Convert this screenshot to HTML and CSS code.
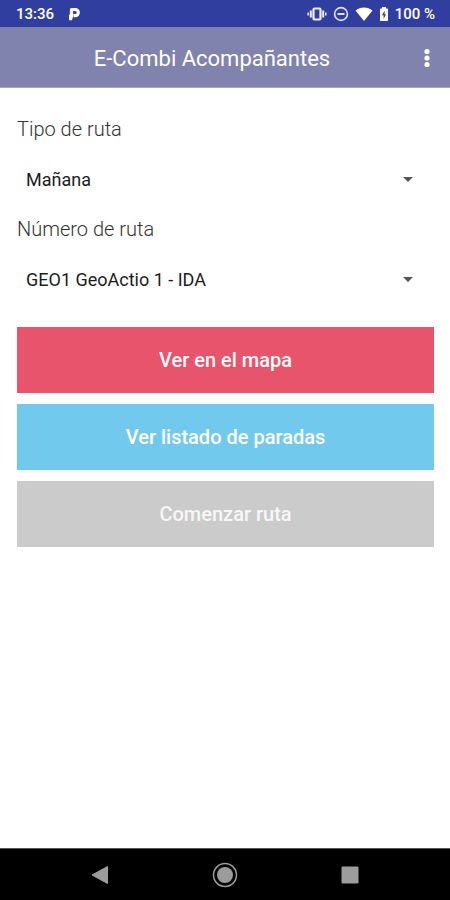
FILE: index.html
```html
<!DOCTYPE html>
<html lang="es">
<head>
    <meta charset="UTF-8">
    <meta name="viewport" content="width=device-width, initial-scale=1.0">
    <title>E-Combi Acompañantes</title>
    <link rel="stylesheet" href="styles.css">
</head>
<body>

    <!-- Status bar -->
    <div class="status-bar">
        <div class="status-left">
            <span>13:36</span>
            <svg width="14" height="16" viewBox="0 0 14 16">
                <path d="M3.500 9V3.500H7.200a3.100 3.100 0 0 1 0 6.200H5.500" fill="none" stroke="#fff" stroke-width="3.200" stroke-linejoin="round"/>
                <path d="M1 8.500h4.500l-1.500 5.800H1z" fill="#fff"/>
            </svg>
        </div>
        <div class="status-right">
            <svg width="20" height="16" viewBox="0 0 20 16" fill="none" stroke="#eceefa">
                <rect x="6.500" y="2.500" width="7" height="11" rx="1" stroke-width="2.200"/>
                <path d="M3.800 4.500v7M16.200 4.500v7" stroke-width="2"/>
                <path d="M1.200 6.500v3M18.800 6.500v3" stroke-width="1.500"/>
            </svg>
            <svg width="16" height="16" viewBox="0 0 16 16" fill="none" stroke="#dfe3f8">
                <circle cx="8" cy="8" r="6.400" stroke-width="1.600"/>
                <path d="M4.500 8h7" stroke-width="2"/>
            </svg>
            <svg width="18" height="16" viewBox="0 0 18 16" fill="#fff">
                <path d="M9 15L.5 4.600C3 2.600 5.800 1.600 9 1.600s6 1 8.500 3z"/>
            </svg>
            <svg width="10" height="16" viewBox="0 0 10 16">
                <path d="M3 1h4v1.500h1.200c.5 0 .8.3.8.8v10.900c0 .5-.3.800-.8.800H1.800c-.5 0-.8-.3-.8-.8V3.300c0-.5.3-.8.8-.8H3z" fill="#fff"/>
                <path d="M5.600 4.500L3 9.300h1.600v3.700L7 8.200H5.600z" fill="#303f9f"/>
            </svg>
            <span>100 %</span>
        </div>
    </div>

    <!-- App bar -->
    <header class="app-bar">
        <h1 class="app-title">E-Combi Acompañantes</h1>
        <button class="menu-button" type="button" aria-label="Más opciones">
            <svg width="6" height="20" viewBox="0 0 6 20" fill="#fff">
                <circle cx="3" cy="3.500" r="2.600"/>
                <circle cx="3" cy="10" r="2.600"/>
                <circle cx="3" cy="16.500" r="2.600"/>
            </svg>
        </button>
    </header>

    <main class="content">
        <div class="field">
            <label for="tipo">Tipo de ruta</label>
            <select id="tipo">
                <option>Mañana</option>
            </select>
        </div>
        <div class="field">
            <label for="numero">Número de ruta</label>
            <select id="numero">
                <option>GEO1 GeoActio 1 - IDA</option>
            </select>
        </div>

        <div class="actions">
            <button class="action action-map" type="button">Ver en el mapa</button>
            <button class="action action-list" type="button">Ver listado de paradas</button>
            <button class="action action-start" type="button" disabled>Comenzar ruta</button>
        </div>
    </main>

    <!-- System navigation -->
    <nav class="nav-bar">
        <button type="button" aria-label="Atrás">
            <svg width="18" height="20" viewBox="0 0 18 20" fill="#9c9c9c">
                <path d="M16.500 1.500v17L1 10z" stroke="#9c9c9c" stroke-linejoin="round"/>
            </svg>
        </button>
        <button type="button" aria-label="Inicio">
            <svg width="26" height="26" viewBox="0 0 26 26">
                <circle cx="13" cy="13" r="11.500" fill="none" stroke="#9c9c9c" stroke-width="1.500"/>
                <circle cx="13" cy="13" r="8" fill="#9c9c9c"/>
            </svg>
        </button>
        <button type="button" aria-label="Recientes">
            <svg width="18" height="18" viewBox="0 0 18 18">
                <rect x="0.500" y="0.500" width="17" height="17" rx="1" fill="#9c9c9c"/>
            </svg>
        </button>
    </nav>

</body>
</html>
```

FILE: styles.css
```css
* {
    box-sizing: border-box;
}

body {
    margin: 0;
    min-height: 100vh;
    display: flex;
    flex-direction: column;
    background-color: #ffffff;
    font-family: Roboto, "Liberation Sans", sans-serif;
}

button {
    border: none;
    background: none;
    padding: 0;
    font-family: inherit;
}

svg {
    display: block;
}

.status-bar {
    display: flex;
    justify-content: space-between;
    align-items: center;
    height: 27px;
    padding: 0 15px 0 16px;
    background-color: #303f9f;
    color: #ffffff;
    font-size: 15px;
    font-weight: 500;
}

.status-left {
    display: flex;
    align-items: center;
    gap: 14px;
}

.status-right {
    display: flex;
    align-items: center;
    gap: 6px;
}

.app-bar {
    display: flex;
    align-items: center;
    height: 61px;
    padding: 2px 10px 0;
    background-color: #8083ad;
    border-bottom: 1px solid #a3a5c3;
}

.app-title {
    flex: 1;
    margin: 0;
    text-align: center;
    color: #ffffff;
    font-size: 22px;
    font-weight: 400;
}

.menu-button {
    display: flex;
    justify-content: center;
    align-items: center;
    width: 26px;
    height: 40px;
}

.content {
    flex: 1;
    padding: 29px 16px 29px 17px;
}

.field {
    display: flex;
    flex-direction: column;
    gap: 18px;
    margin-bottom: 18px;
}

.field label {
    color: #333333;
    font-size: 20px;
    font-weight: 300;
    line-height: 24px;
}

.field select {
    appearance: none;
    height: 40px;
    padding: 0 40px 0 9px;
    border: none;
    color: #1c1c1c;
    font-family: inherit;
    font-size: 18px;
    /* drop-down arrow */
    background: url("data:image/svg+xml,%3Csvg xmlns='http://www.w3.org/2000/svg' width='10' height='5'%3E%3Cpath d='M0 0h10L5 5z' fill='%23555'/%3E%3C/svg%3E") no-repeat right 21px center;
}

.actions {
    display: flex;
    flex-direction: column;
    gap: 11px;
    margin-top: 28px;
}

.action {
    height: 66px;
    color: #ffffff;
    font-size: 20px;
    font-weight: 500;
}

.action-map {
    background-color: #e8546b;
}

.action-list {
    background-color: #72c9ee;
}

.action-start {
    background-color: #cbcbcb;
    color: #f7f7f7;
}

.nav-bar {
    display: flex;
    height: 52px;
    padding: 0 38px;
    background-color: #000000;
    border-top: 1px solid #555555;
}

.nav-bar button {
    flex: 1;
    display: flex;
    justify-content: center;
    align-items: center;
}
```
